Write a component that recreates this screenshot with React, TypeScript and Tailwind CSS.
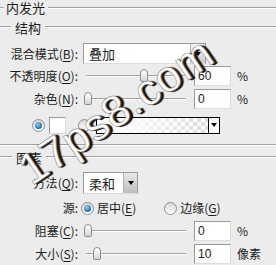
import React from "react";

const groove = "h-[2px] border-t border-t-[#a2a2a2] border-b border-b-white";

const Mn = ({ c }: { c: string }) => (
  <>
    (<span className="underline underline-offset-2">{c}</span>):
  </>
);

const Label = ({ text, c }: { text: string; c: string }) => (
  <div className="w-[80px] shrink-0 pr-[2px] text-right whitespace-nowrap">
    {text}
    <Mn c={c} />
  </div>
);

const Slider = ({ pos }: { pos: number }) => (
  <div className="relative w-[100px] h-[14px] ml-[6px] flex items-center">
    <div className={`w-full ${groove}`}></div>
    <div
      className="absolute top-0 w-[8px] h-[13px] rounded-t-[4px] rounded-b-[2px] border border-[#8c8c8c] bg-gradient-to-b from-white to-[#d6d6d6]"
      style={{ left: pos }}
    ></div>
  </div>
);

const NumBox = ({ v, unit }: { v: string; unit: string }) => (
  <>
    <div className="ml-[8px] w-[37px] h-[20px] bg-white border border-[#9a9a9a] border-b-[#dcdcdc] border-r-[#dcdcdc] pl-[3px] flex items-center font-['Liberation_Sans'] text-[12px]">
      {v}
    </div>
    <div className="ml-[6px]">{unit}</div>
  </>
);

const Radio = ({ on }: { on?: boolean }) => (
  <div className="w-[13px] h-[13px] rounded-full border border-[#8e8e8e] bg-gradient-to-b from-[#d8d8d8] to-white flex items-center justify-center">
    {on && (
      <div className="w-[7px] h-[7px] rounded-full bg-[radial-gradient(circle_at_40%_35%,#9ad0f0,#1d6fa5_70%,#0d3f63)]"></div>
    )}
  </div>
);

const Arrow = () => (
  <div className="w-0 h-0 border-l-[3px] border-r-[3px] border-t-[4px] border-l-transparent border-r-transparent border-t-black"></div>
);

export default function App() {
  return (
    <div className="relative w-[276px] h-[265px] overflow-hidden bg-[#ececec] text-[12px] leading-none text-[#1c1c1c] font-['Noto_Sans_CJK_SC','Liberation_Sans',sans-serif]">
      {/* 内发光 */}
      <div className="h-[15px] flex items-center">
        <div className={`w-[4px] ${groove}`}></div>
        <div className="px-[2px] text-[13px]">内发光</div>
        <div className={`flex-1 ml-[1px] ${groove}`}></div>
      </div>

      {/* 结构 */}
      <div className="h-[22px] mt-[1px] flex items-center">
        <div className={`w-[11px] ${groove}`}></div>
        <div className="px-[4px] text-[13px]">结构</div>
        <div className={`flex-1 ${groove}`}></div>
      </div>

      <div className="h-[21px] mt-[5px] flex items-center">
        <Label text="混合模式" c="B" />
        <div className="ml-[3px] w-[123px] h-[21px] flex bg-white border border-[#9a9a9a] border-b-[#dcdcdc]">
          <div className="flex-1 flex items-center pl-[5px] text-[13px]">叠加</div>
          <div className="w-[15px] border-l border-[#b4b4b4] bg-gradient-to-b from-[#f4f4f4] to-[#cfcfcf] flex items-center justify-center">
            <Arrow />
          </div>
        </div>
      </div>

      <div className="h-[21px] mt-[1px] flex items-center">
        <Label text="不透明度" c="O" />
        <Slider pos={54} />
        <NumBox v="60" unit="%" />
      </div>

      <div className="h-[21px] mt-[2px] flex items-center">
        <Label text="杂色" c="N" />
        <Slider pos={-2} />
        <NumBox v="0" unit="%" />
      </div>

      <div className="h-[18px] mt-[7px] flex items-center">
        <div className="ml-[32px]">
          <Radio on />
        </div>
        <div className="ml-[4px] w-[17px] h-[17px] bg-white border border-[#9a9a9a] border-b-[#dcdcdc] border-r-[#dcdcdc]"></div>
        <div className="ml-[12px]">
          <Radio />
        </div>
        <div className="ml-[5px] w-[124px] h-[17px] flex border border-black">
          <div className="flex-1 bg-[linear-gradient(45deg,#d2d2d2_25%,transparent_25%,transparent_75%,#d2d2d2_75%),linear-gradient(45deg,#d2d2d2_25%,transparent_25%,transparent_75%,#d2d2d2_75%)] bg-[length:8px_8px] bg-[position:0_0,4px_4px] bg-white">
            <div className="w-full h-full bg-gradient-to-r from-white via-white/70 to-white/20"></div>
          </div>
          <div className="w-[11px] border-l border-black bg-white flex items-center justify-center">
            <Arrow />
          </div>
        </div>
      </div>

      <div className={`mt-[10px] ${groove}`}></div>

      {/* 图素 */}
      <div className="h-[14px] mt-[4px] flex items-center">
        <div className={`w-[12px] ${groove}`}></div>
        <div className="px-[4px] text-[13px]">图素</div>
        <div className={`flex-1 ${groove}`}></div>
      </div>

      <div className="h-[22px] mt-[8px] flex items-center">
        <Label text="方法" c="Q" />
        <div className="ml-[3px] w-[55px] h-[22px] flex bg-white border border-[#9a9a9a] border-b-[#dcdcdc]">
          <div className="flex-1 flex items-center pl-[5px] text-[13px]">柔和</div>
          <div className="w-[14px] border-l border-[#b4b4b4] bg-gradient-to-b from-[#e8e8e8] to-[#bdbdbd] flex items-center justify-center">
            <Arrow />
          </div>
        </div>
      </div>

      <div className="h-[20px] mt-[4px] flex items-center">
        <div className="w-[80px] pr-[2px] text-right">源:</div>
        <div className="ml-[1px]">
          <Radio on />
        </div>
        <div className="ml-[3px]">
          居中(<span className="underline underline-offset-2">E</span>)
        </div>
        <div className="ml-[28px]">
          <Radio />
        </div>
        <div className="ml-[3px]">
          边缘(<span className="underline underline-offset-2">G</span>)
        </div>
      </div>

      <div className="h-[21px] mt-[2px] flex items-center">
        <Label text="阻塞" c="C" />
        <Slider pos={-2} />
        <NumBox v="0" unit="%" />
      </div>

      <div className="h-[21px] mt-[2px] flex items-center">
        <Label text="大小" c="S" />
        <Slider pos={7} />
        <NumBox v="10" unit="像素" />
      </div>

      {/* watermark */}
      <div className="absolute left-[116px] top-[111px] -translate-x-1/2 -translate-y-1/2 -rotate-[34deg] whitespace-nowrap font-['Liberation_Sans',sans-serif] text-[44px] tracking-[1px] leading-none text-white [text-shadow:1px_1px_0_#333,2px_2px_0_#111,3px_2px_1px_#222] [-webkit-text-stroke:0.5px_#777]">
        17ps8.com
      </div>
    </div>
  );
}
